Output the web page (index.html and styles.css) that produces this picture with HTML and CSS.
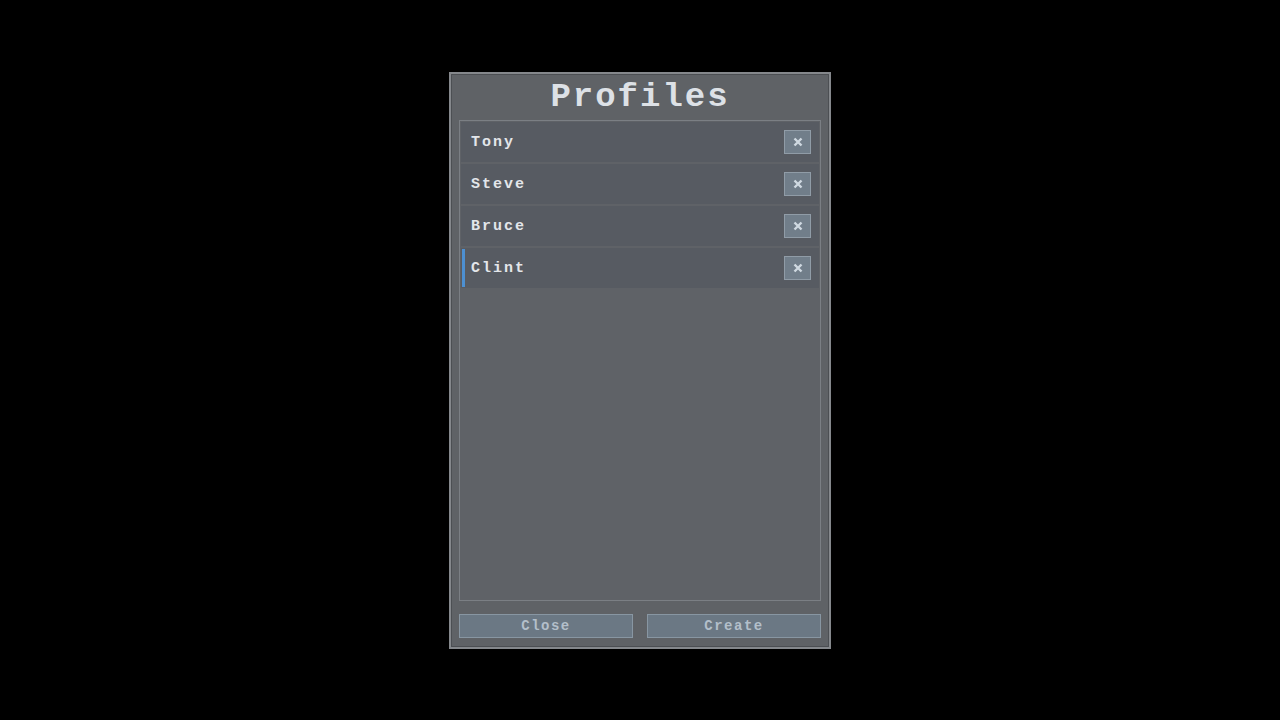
FILE: index.html
```html
<!DOCTYPE html>
<html lang="en">

<head>
  <meta charset="UTF-8" />
  <meta name="viewport" content="width=device-width, initial-scale=1.0" />
  <title>Profiles</title>
  <link rel="stylesheet" href="styles.css">
</head>

<body>
  <section class="profiles">
    <h1 class="title">Profiles</h1>
    <div class="list">
      <div class="row">
        <span class="name">Tony</span>
        <button class="del"><svg viewBox="0 0 10 10"><path d="M1.5 1.5 8.5 8.5M8.5 1.5 1.5 8.5" /></svg></button>
      </div>
      <div class="row">
        <span class="name">Steve</span>
        <button class="del"><svg viewBox="0 0 10 10"><path d="M1.5 1.5 8.5 8.5M8.5 1.5 1.5 8.5" /></svg></button>
      </div>
      <div class="row">
        <span class="name">Bruce</span>
        <button class="del"><svg viewBox="0 0 10 10"><path d="M1.5 1.5 8.5 8.5M8.5 1.5 1.5 8.5" /></svg></button>
      </div>
      <div class="row active">
        <span class="name">Clint</span>
        <button class="del"><svg viewBox="0 0 10 10"><path d="M1.5 1.5 8.5 8.5M8.5 1.5 1.5 8.5" /></svg></button>
      </div>
    </div>
    <div class="actions">
      <button class="btn">Close</button>
      <button class="btn">Create</button>
    </div>
  </section>
</body>

</html>
```

FILE: styles.css
```css
* {
  box-sizing: border-box;
}

body {
  margin: 0;
  padding: 0;
  background-color: #000000;
  font-family: "Liberation Mono", "DejaVu Sans Mono", monospace;
  font-weight: 700;
  height: 100vh;
  display: flex;
  justify-content: center;
}

.profiles {
  margin-top: 72px;
  width: 382px;
  height: 577px;
  background-color: #5f6266;
  border: 2px solid #85888c;
  box-shadow: inset 0 0 0 1px #4c4f53;
  padding: 0 8px 9px 8px;
  display: flex;
  flex-direction: column;
}

.title {
  margin: 0;
  height: 46px;
  line-height: 46px;
  text-align: center;
  font-size: 34px;
  letter-spacing: 2px;
  color: #dde1e6;
}

.list {
  flex: 1;
  border: 1px solid #7b7f84;
  background-color: #5f6267;
  padding: 1px;
  display: flex;
  flex-direction: column;
  gap: 2px;
}

.row {
  position: relative;
  height: 40px;
  background-color: #575b62;
  display: flex;
  align-items: center;
  justify-content: space-between;
  padding: 0 8px 0 10px;
}

.row.active::before {
  content: "";
  position: absolute;
  left: 1px;
  top: 1px;
  bottom: 1px;
  width: 3px;
  background-color: #4d90d2;
}

.name {
  font-size: 15px;
  letter-spacing: 2px;
  color: #e3e6ea;
}

.del {
  width: 27px;
  height: 24px;
  padding: 0;
  border: 1px solid #909ca7;
  background-color: #717e8a;
  display: flex;
  align-items: center;
  justify-content: center;
}

.del svg {
  width: 10px;
  height: 10px;
  stroke: #cfd9e1;
  stroke-width: 2.4;
  fill: none;
}

.actions {
  margin-top: 13px;
  display: flex;
  gap: 14px;
}

.btn {
  flex: 1;
  height: 24px;
  padding: 0;
  border: 1px solid #8896a2;
  background-color: #6b7884;
  color: #b3bfca;
  font-family: "Liberation Mono", "DejaVu Sans Mono", monospace;
  font-weight: 700;
  font-size: 14px;
  letter-spacing: 1.5px;
}
```
